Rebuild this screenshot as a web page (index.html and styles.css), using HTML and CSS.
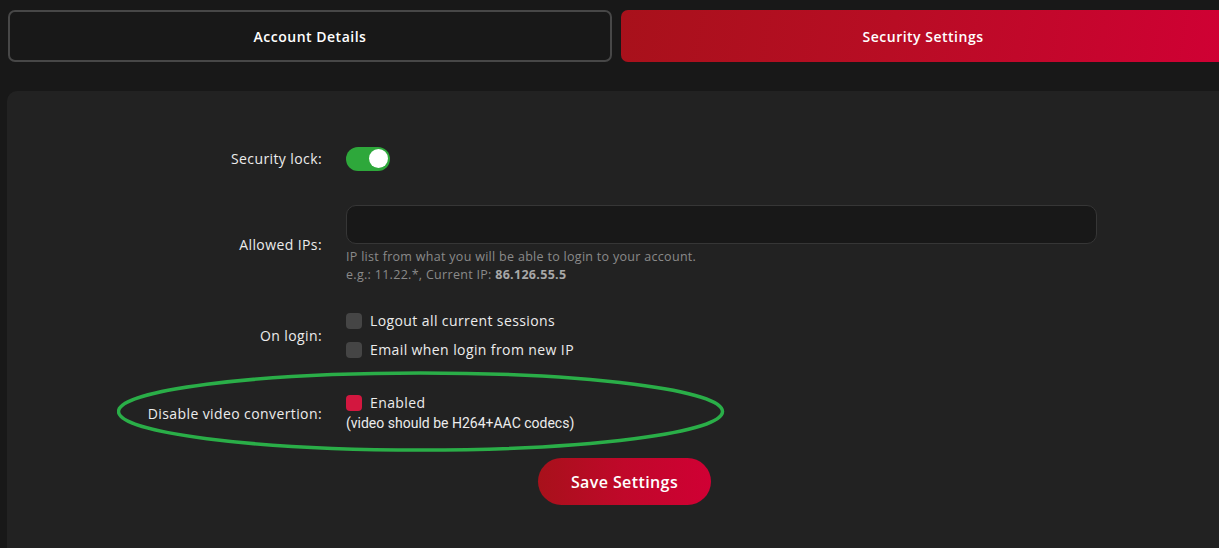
FILE: index.html
```html
<!DOCTYPE html>
<html>
<head>
<meta charset="utf-8">
<link rel="stylesheet" href="styles.css">
</head>
<body>
<div class="page">
  <div class="tabs">
    <div class="tab tab-plain">Account Details</div>
    <div class="tab tab-active">Security Settings</div>
  </div>
  <div class="panel">
    <div class="row row-lock">
      <div class="label">Security lock:</div>
      <div class="control">
        <div class="toggle"><span class="knob"></span></div>
      </div>
    </div>
    <div class="row row-ips">
      <div class="label">Allowed IPs:</div>
      <div class="control">
        <div class="input"></div>
        <div class="hint">IP list from what you will be able to login to your account.<br>e.g.: 11.22.*, Current IP: <b>86.126.55.5</b></div>
      </div>
    </div>
    <div class="row row-login">
      <div class="label">On login:</div>
      <div class="control">
        <div class="check"><span class="box"></span>Logout all current sessions</div>
        <div class="check"><span class="box"></span>Email when login from new IP</div>
      </div>
    </div>
    <div class="row row-video">
      <div class="label">Disable video convertion:</div>
      <div class="control">
        <div class="check check-tight"><span class="box box-on"></span>Enabled</div>
        <div class="note">(video should be H264+AAC codecs)</div>
      </div>
    </div>
    <div class="actions">
      <button class="save">Save Settings</button>
    </div>
  </div>
  <svg class="annotation" width="620" height="90" viewBox="0 0 620 90">
    <ellipse cx="303.5" cy="41.5" rx="302" ry="38.5" fill="none" stroke="#2aae48" stroke-width="3.5"/>
  </svg>
</div>
</body>
</html>
```

FILE: styles.css
```css
html, body {
  margin: 0;
  padding: 0;
  background: #181818;
  overflow: hidden;
}
body {
  width: 1219px;
  height: 548px;
  font-family: "Open Sans", "Liberation Sans", sans-serif;
  color: #ececec;
}
.page {
  position: relative;
  width: 1219px;
  height: 548px;
  overflow: hidden;
  padding-top: 10px;
  box-sizing: border-box;
}
.tabs {
  display: flex;
  gap: 9px;
  margin-left: 8px;
  width: 1217px;
}
.tab {
  flex: 0 0 604px;
  height: 52px;
  box-sizing: border-box;
  border-radius: 7px;
  display: flex;
  align-items: center;
  justify-content: center;
  font-size: 14px;
  font-weight: 600;
  letter-spacing: 0.5px;
  color: #fff;
}
.tab-plain {
  border: 2px solid #474747;
  background: #181818;
}
.tab-active {
  background: linear-gradient(100deg, #a8111b 0%, #b80d24 45%, #d00034 100%);
}
.panel {
  margin-top: 29px;
  margin-left: 7px;
  width: 1260px;
  height: 480px;
  background: #222222;
  border-radius: 10px 0 0 0;
  padding-top: 56px;
  box-sizing: border-box;
}
.row {
  display: flex;
  align-items: center;
  gap: 24px;
}
.label {
  flex: 0 0 315px;
  text-align: right;
  font-size: 14px;
  letter-spacing: 0.4px;
  color: #ececec;
}
.control {
  display: flex;
  flex-direction: column;
}
.row-lock { height: 23px; }
.row-ips { margin-top: 35px; }
.row-login { margin-top: 22px; }
.row-video { margin-top: 28px; }
.toggle {
  width: 44px;
  height: 24px;
  border-radius: 12px;
  background: #2ea83b;
  display: flex;
  align-items: center;
  justify-content: flex-end;
  padding: 0 2px;
  box-sizing: border-box;
}
.knob {
  width: 19px;
  height: 19px;
  border-radius: 50%;
  background: #fff;
}
.input {
  width: 751px;
  height: 39px;
  box-sizing: border-box;
  background: #181818;
  border: 1px solid #363636;
  border-radius: 10px;
}
.hint {
  margin-top: 4px;
  font-size: 12.5px;
  letter-spacing: 0.3px;
  line-height: 18px;
  color: #8a8a8a;
}
.hint b {
  color: #a8a8a8;
  font-weight: 700;
}
.check {
  display: flex;
  align-items: center;
  gap: 8px;
  height: 29px;
  font-size: 14px;
  letter-spacing: 0.4px;
  color: #ececec;
}
.check-tight { height: 21px; }
.box {
  width: 16px;
  height: 16px;
  border-radius: 4px;
  background: #454545;
}
.box-on {
  background: #d3173f;
}
.note {
  height: 21px;
  line-height: 21px;
  font-family: Roboto, "Liberation Sans", sans-serif;
  font-size: 14px;
  font-weight: 400;
  color: #ececec;
}
.actions {
  margin-top: 24px;
  padding-left: 531px;
}
.save {
  width: 173px;
  height: 47px;
  border: none;
  border-radius: 24px;
  background: linear-gradient(90deg, #a8111b 0%, #c0082a 50%, #d00034 100%);
  color: #fff;
  font-family: "Open Sans", "Liberation Sans", sans-serif;
  font-size: 16px;
  font-weight: 600;
  letter-spacing: 0.4px;
}
.annotation {
  position: absolute;
  left: 117px;
  top: 370px;
  pointer-events: none;
}
```
